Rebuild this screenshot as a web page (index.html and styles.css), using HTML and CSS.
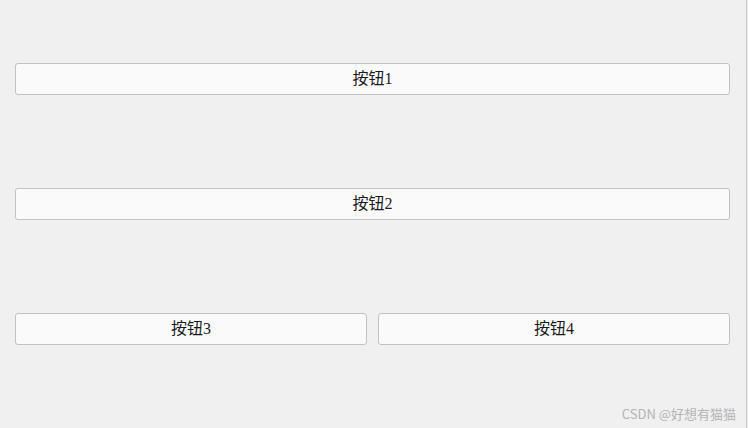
FILE: index.html
```html
<!DOCTYPE html>
<html lang="zh-CN">
<head>
<meta charset="utf-8">
<title>Buttons</title>
<link rel="stylesheet" href="styles.css">
</head>
<body>
<div class="window">
  <div class="rows">
    <div class="row"><button class="btn">按钮1</button></div>
    <div class="row"><button class="btn">按钮2</button></div>
    <div class="row"><button class="btn">按钮3</button><button class="btn">按钮4</button></div>
  </div>
  <div class="watermark">CSDN @好想有猫猫</div>
</div>
</body>
</html>
```

FILE: styles.css
```css
html, body {
  margin: 0;
  padding: 0;
  background: #f0f0f0;
}
.window {
  position: relative;
  width: 747px;
  height: 428px;
  box-sizing: border-box;
  border-right: 1px solid #c9c9c9;
  padding: 63px 16px 0 15px;
}
.rows {
  display: flex;
  flex-direction: column;
  gap: 93px;
}
.row {
  display: flex;
  gap: 11px;
}
.btn {
  flex: 1 1 0;
  height: 32px;
  margin: 0;
  padding: 0;
  background: #fafafa;
  border: 1px solid #c2c2c2;
  border-radius: 3px;
  font-family: "Liberation Serif", "Noto Sans CJK SC", serif;
  font-size: 16px;
  color: #1a1a1a;
  line-height: 30px;
  text-align: center;
}
.watermark {
  position: absolute;
  right: 10px;
  bottom: 6px;
  font-family: "Noto Sans CJK SC", "Liberation Sans", sans-serif;
  font-size: 13px;
  line-height: 16px;
  color: #b4b4b4;
}
```
